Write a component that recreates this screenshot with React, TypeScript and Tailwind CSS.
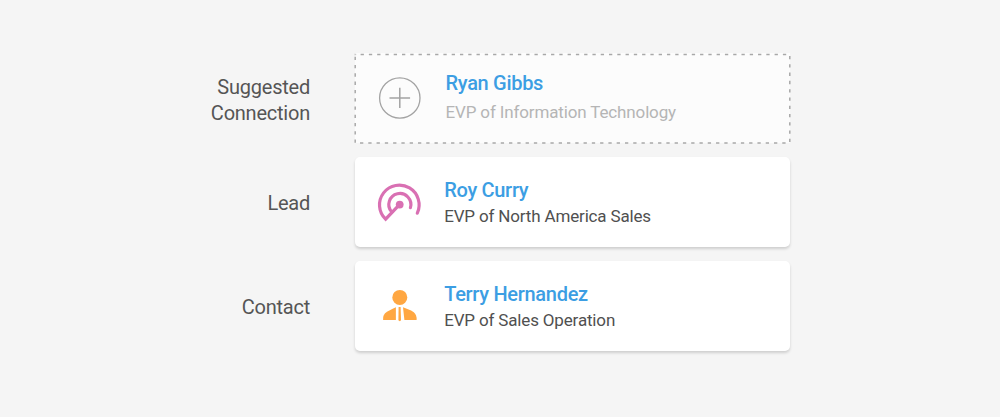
import React from "react";

function PlusIcon() {
  return (
    <svg width="44" height="44" viewBox="0 0 44 44" fill="none" stroke="#a3a3a3">
      <circle cx="21.8" cy="22" r="20.2" strokeWidth="1.3" />
      <path d="M21.8 11.8V32M11.5 22H32.1" strokeWidth="1.5" />
    </svg>
  );
}

function LeadIcon() {
  return (
    <svg className="overflow-visible" width="44" height="44" viewBox="0 0 44 44" fill="none" stroke="#d970b3" strokeWidth="3.2">
      <path d="M39.3 33.2A19.8 19.8 0 1 0 7.6 39.2L21.7 24.4" strokeLinecap="round" strokeLinejoin="miter" />
      <path d="M32.4 27.6A11 11 0 1 0 13.6 31.8" strokeLinecap="round" />
      <circle cx="21.7" cy="24.6" r="3.9" fill="#d970b3" stroke="none" />
    </svg>
  );
}

function ContactIcon() {
  return (
    <svg width="44" height="44" viewBox="0 0 44 44" fill="#ffa742">
      <circle cx="21.8" cy="13.4" r="7.5" />
      <path d="M17.9 23.2V35.9H5.1Q4.4 30.5 9 27.7Q13.1 25.3 17.9 23.2Z" />
      <path d="M25 23.2L30 25.3Q33.3 26.5 35.8 28.3Q38.9 30.9 38.6 35.9H26.4Z" />
      <path d="M20.6 23.1H22.6L23 36.3L21.8 37.3L20.4 36.3Z" />
    </svg>
  );
}

const people = [
  { label: "Suggested Connection", name: "Ryan Gibbs", title: "EVP of Information Technology", icon: <PlusIcon />, suggested: true },
  { label: "Lead", name: "Roy Curry", title: "EVP of North America Sales", icon: <LeadIcon />, suggested: false },
  { label: "Contact", name: "Terry Hernandez", title: "EVP of Sales Operation", icon: <ContactIcon />, suggested: false },
];

export default function App() {
  return (
    <main className="flex h-[417px] w-[1000px] flex-col gap-3.5 bg-[#f5f5f5] pt-[53px] font-['Roboto',sans-serif]">
      {people.map((p) => (
        <section key={p.name} className="flex h-[90px] shrink-0 items-center">
          <h2 className={`ml-[190px] w-[120px] text-right text-[20px] leading-[26px] tracking-[-0.23px] text-[#555] ${p.suggested ? "pt-1" : "pt-0.5"}`}>
            {p.label}
          </h2>
          <div
            className={
              p.suggested
                ? "relative ml-[45px] flex h-[90px] w-[435px] items-center bg-[#fcfcfc] pl-[23px]"
                : "ml-[45px] flex h-[90px] w-[435px] items-center rounded-[5px] bg-white pl-[23px] shadow-[0_2px_3px_rgba(0,0,0,0.16)]"
            }
          >
            {p.suggested && (
              <svg className="absolute top-0 left-0 overflow-visible" width="435" height="90" fill="none" stroke="#a8a8a8" strokeWidth="1.5">
                <path d="M5.6 1.4H435M5 90H435" strokeDasharray="3.3 4.98" />
                <path d="M0.2 3.8V90M434.8 3.05V90" strokeDasharray="3.3 4.97" />
                <path d="M-0.5 1.5H1.2" opacity="0.6" />
              </svg>
            )}
            {p.icon}
            <div className={p.suggested ? "ml-[23.5px] pb-px" : "ml-[22.2px] pt-0.5"}>
              <h3 className="text-[20px] leading-[26px] font-medium tracking-[-0.3px] text-[#3c9ee3]">{p.name}</h3>
              <p className={p.suggested ? "mt-[3px] text-[17px] leading-[26px] tracking-[-0.14px] text-[#b5b5b5]" : "text-[17px] leading-[26px] tracking-[-0.16px] text-[#505050]"}>
                {p.title}
              </p>
            </div>
          </div>
        </section>
      ))}
    </main>
  );
}
